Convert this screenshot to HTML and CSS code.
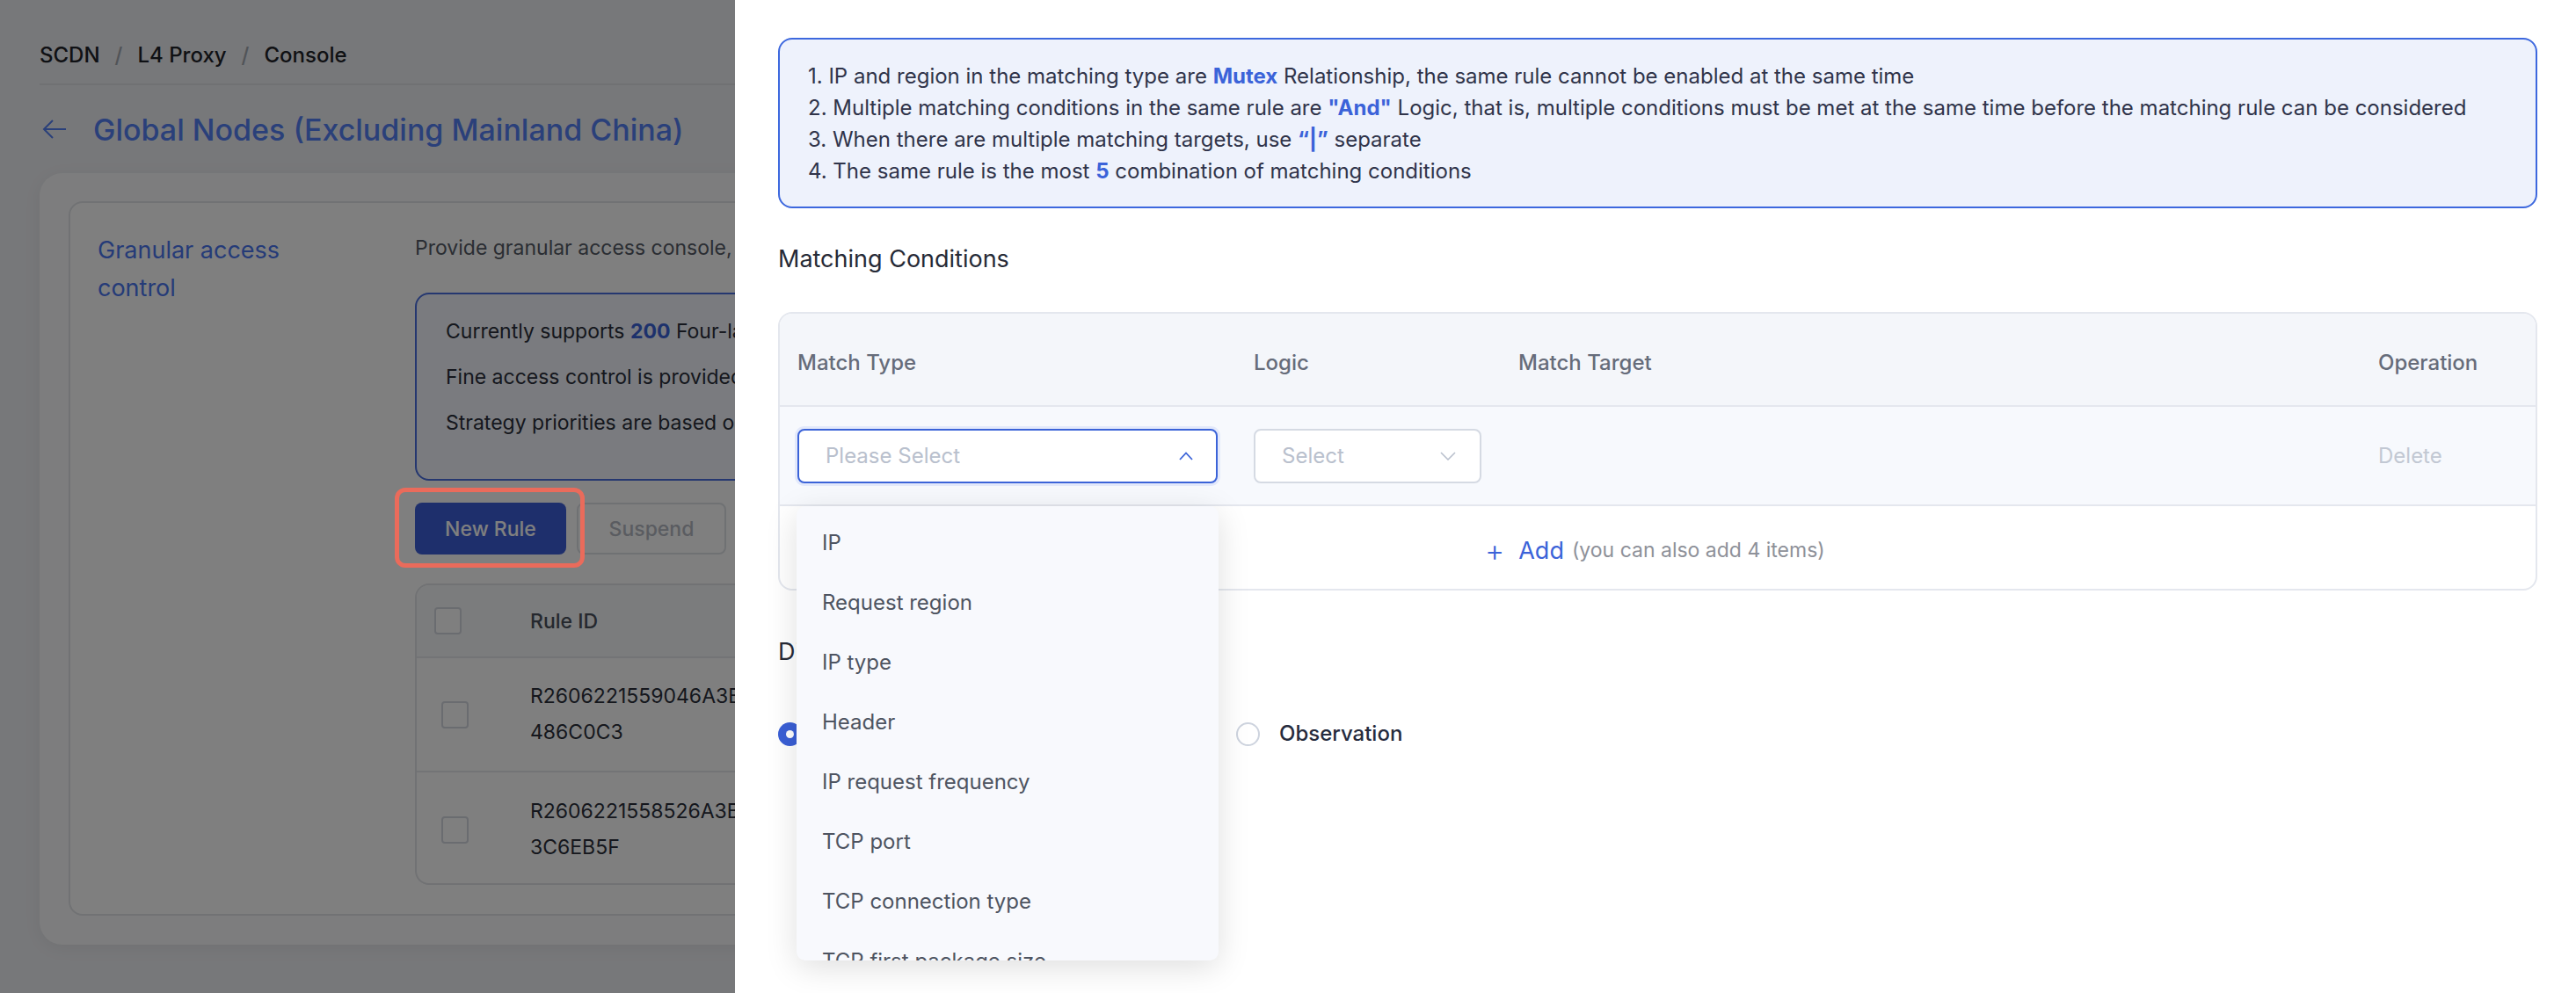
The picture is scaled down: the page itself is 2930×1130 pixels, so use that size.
FILE: index.html
```html
<!DOCTYPE html>
<html lang="en">

<head>
  <meta charset="UTF-8">
  <title>SCDN - L4 Proxy Console</title>
  <link rel="stylesheet" href="styles.css">
</head>

<body>
  <!-- 控制台主体 -->
  <div class="page">
    <div class="crumbs">
      <span>SCDN</span><i>/</i><span>L4 Proxy</span><i>/</i><span>Console</span>
    </div>

    <div class="title-row">
      <svg class="back" width="28" height="24" viewBox="0 0 28 24">
        <path d="M27 12H2M12 2L2 12l10 10" fill="none" stroke="currentColor" stroke-width="2" />
      </svg>
      <h1>Global Nodes (Excluding Mainland China)</h1>
    </div>

    <div class="panel">
      <div class="section">
        <div class="section-name">Granular access control</div>
        <div class="section-body">
          <p class="desc">Provide granular access console, you can customize the four-layer access control rules according to the request characteristics</p>
          <div class="tips">
            <p>Currently supports <b>200</b> Four-layer access control rules, the number of rules already used is 2</p>
            <p>Fine access control is provided for the four-layer proxy forwarding rules of the current domain</p>
            <p>Strategy priorities are based on the rule sorting, the higher the rule, the higher the priority</p>
          </div>
          <div class="toolbar">
            <button class="btn-primary">New Rule</button>
            <button class="btn">Suspend</button>
            <button class="btn">Enable</button>
          </div>
          <div class="rules">
            <div class="rules-head">
              <span class="check"></span>
              <span>Rule ID</span>
              <span>Matching Conditions</span>
            </div>
            <div class="rules-row">
              <span class="check"></span>
              <span>R2606221559046A3E9D2B<br>486C0C3</span>
              <span>IP type</span>
            </div>
            <div class="rules-row">
              <span class="check"></span>
              <span>R2606221558526A3B71F0<br>3C6EB5F</span>
              <span>Request region</span>
            </div>
          </div>
        </div>
      </div>
    </div>
  </div>

  <div class="mask"></div>

  <!-- 右侧抽屉：新建规则 -->
  <div class="drawer">
    <div class="notice">
      <p>1. IP and region in the matching type are <b>Mutex</b> Relationship, the same rule cannot be enabled at the same time</p>
      <p>2. Multiple matching conditions in the same rule are <b>"And"</b> Logic, that is, multiple conditions must be met at the same time before the matching rule can be considered</p>
      <p>3. When there are multiple matching targets, use <b>“|”</b> separate</p>
      <p>4. The same rule is the most <b>5</b> combination of matching conditions</p>
    </div>

    <h3 class="block-title">Matching Conditions</h3>

    <div class="cond">
      <div class="cond-head">
        <span>Match Type</span>
        <span>Logic</span>
        <span>Match Target</span>
        <span>Operation</span>
      </div>
      <div class="cond-row">
        <div class="cell">
          <div class="select open">
            <span>Please Select</span>
            <svg width="16" height="10" viewBox="0 0 16 10">
              <path d="M1 9l7-7.5L15 9" fill="none" stroke="currentColor" stroke-width="1.8" />
            </svg>
            <ul class="options">
              <li>IP</li>
              <li>Request region</li>
              <li>IP type</li>
              <li>Header</li>
              <li>IP request frequency</li>
              <li>TCP port</li>
              <li>TCP connection type</li>
              <li>TCP first package size</li>
              <li>TCP first package content</li>
            </ul>
          </div>
        </div>
        <div class="cell">
          <div class="select small">
            <span>Select</span>
            <svg width="18" height="10" viewBox="0 0 18 10">
              <path d="M1 1l8 8 8-8" fill="none" stroke="currentColor" stroke-width="1.6" />
            </svg>
          </div>
        </div>
        <div class="cell"></div>
        <div class="cell delete">Delete</div>
      </div>
      <div class="cond-add">
        <span class="plus">+</span><span class="add">Add</span><span class="hint">(you can also add 4 items)</span>
      </div>
    </div>

    <h3 class="block-title second">Disposal Method</h3>

    <div class="radios">
      <label class="radio on"><span class="dot"></span>Interception</label>
      <label class="radio"><span class="dot"></span>Observation</label>
    </div>
  </div>
</body>

</html>
```

FILE: styles.css
```css
* {
  margin: 0;
  padding: 0;
  box-sizing: border-box;
  font-family: "Inter", "Noto Sans", sans-serif;
}

body {
  background-color: #eff0f4;
  width: 2930px;
  height: 1130px;
  overflow: hidden;
}

/* 左侧控制台 */
.page {
  padding-left: 45px;
  width: 2886px;
}

.crumbs {
  height: 97px;
  padding-top: 48px;
  line-height: 30px;
  font-size: 24px;
  font-weight: 500;
  color: #1f2329;
  border-bottom: 2px solid #e0e2e7;
}

.crumbs i {
  font-style: normal;
  color: #a3a8b0;
  margin: 0 17px;
}

.title-row {
  display: flex;
  align-items: center;
  height: 44px;
  margin-top: 28px;
  color: #5580f4;
}

.title-row .back {
  margin-left: 3px;
  margin-right: 30px;
}

.title-row h1 {
  font-size: 34px;
  font-weight: 500;
}

.panel {
  margin-top: 28px;
  height: 878px;
  padding: 32px 33px;
  background-color: #fafbfc;
  border-radius: 26px;
  box-shadow: 0 4px 20px rgba(0, 0, 0, 0.06);
}

.section {
  display: grid;
  grid-template-columns: 361px 1fr;
  height: 813px;
  padding: 36px 0 0 31px;
  background-color: #fff;
  border: 2px solid #e2e4e8;
  border-radius: 16px;
}

.section-name {
  width: 260px;
  margin-top: -4px;
  font-size: 27px;
  line-height: 43px;
  color: #4a76f0;
}

.desc {
  font-size: 23px;
  line-height: 30px;
  color: #555b66;
  white-space: nowrap;
}

.tips {
  margin-top: 36px;
  padding: 16px 33px 38px;
  border: 2px solid #4a6fe0;
  border-radius: 16px;
  background-color: #f4f7fe;
  font-size: 23px;
  line-height: 52px;
  color: #2b2f3a;
  white-space: nowrap;
}

.tips b {
  color: #3b63d9;
}

.toolbar {
  display: flex;
  gap: 12px;
  margin-top: 25px;
}

.toolbar button {
  height: 59px;
  border-radius: 8px;
  font-size: 23px;
  font-weight: 500;
}

.btn-primary {
  position: relative;
  width: 172px;
  border: none;
  background-color: #3d5fd8;
  color: #fff;
}

/* 引导高亮框，叠在遮罩上面 */
.btn-primary::after {
  content: '';
  position: absolute;
  inset: -17px -21px -15px -23px;
  border: 5px solid #ea6b5b;
  border-radius: 12px;
  z-index: 20;
}

.btn {
  width: 170px;
  border: 2px solid #dfe2e7;
  background-color: #fff;
  color: #b4b9c2;
}

.rules {
  margin-top: 33px;
  height: 343px;
  border: 2px solid #e2e4e8;
  border-radius: 16px;
  overflow: hidden;
  font-size: 23px;
  color: #2b2f3a;
}

.rules-head,
.rules-row {
  display: grid;
  grid-template-columns: 129px 330px 1fr;
  align-items: center;
  border-bottom: 2px solid #e6e8ec;
}

.rules-head {
  height: 83px;
  background-color: #f7f8fa;
  font-weight: 500;
  color: #4a505c;
}

.rules-row {
  height: 130px;
  line-height: 41px;
}

.rules-row:last-child {
  border-bottom: none;
}

.check {
  width: 31px;
  height: 31px;
  margin-left: 20px;
  border: 2px solid #d5d9e0;
  border-radius: 4px;
  background-color: #fff;
}

.rules-row .check {
  margin-left: 28px;
}

.mask {
  position: fixed;
  inset: 0;
  background-color: rgba(0, 0, 0, 0.5);
  z-index: 10;
}

/* 右侧抽屉 */
.drawer {
  position: fixed;
  top: 0;
  right: 0;
  bottom: 0;
  width: 2094px;
  padding: 43px 44px 0 49px;
  background-color: #fff;
  z-index: 30;
  overflow: hidden;
}

.notice {
  padding: 24px 32px 22px;
  border: 2px solid #3d68de;
  border-radius: 16px;
  background-color: #eef2fc;
  font-size: 24px;
  line-height: 36px;
  color: #30344a;
}

.notice b {
  color: #3b63d9;
  font-weight: 700;
}

.block-title {
  margin-top: 40px;
  font-size: 27px;
  line-height: 36px;
  font-weight: 400;
  color: #262a36;
}

.block-title.second {
  margin-top: 52px;
}

.cond {
  margin-top: 42px;
  border: 2px solid #e4e7ee;
  border-radius: 16px;
}

.cond-head,
.cond-row {
  display: grid;
  grid-template-columns: 519px 301px 1fr 199px;
  align-items: center;
  border-bottom: 2px solid #e4e7ee;
}

.cond-head span,
.cond-row .cell {
  padding-left: 20px;
}

.cond-head {
  height: 106px;
  padding-top: 6px;
  background-color: #f4f6fa;
  border-radius: 14px 14px 0 0;
  font-size: 24px;
  font-weight: 500;
  color: #666c7a;
}

.cond-row {
  height: 113px;
  background-color: #f7f9fd;
}

.select {
  position: relative;
  display: flex;
  align-items: center;
  justify-content: space-between;
  width: 478px;
  height: 62px;
  padding: 0 26px 0 30px;
  border: 2px solid #d5dae3;
  border-radius: 8px;
  background-color: #fff;
  font-size: 24px;
  color: #b9c0cd;
}

.select svg {
  color: #b9c0cd;
}

.select.open {
  border-color: #3b63d8;
  box-shadow: 0 0 0 3px #e3e9fb;
}

.select.open svg {
  color: #3b63d8;
}

.select.small {
  width: 259px;
  padding: 0 27px 0 30px;
}

.delete {
  font-size: 24px;
  color: #c2c8d3;
}

.cond-add {
  height: 94px;
  padding: 6px 0 0 802px;
  display: flex;
  align-items: center;
}

.plus {
  font-size: 34px;
  font-weight: 300;
  color: #3b63d9;
  margin-right: 16px;
}

.add {
  font-size: 27px;
  color: #3b63d9;
  margin-right: 9px;
}

.hint {
  font-size: 23px;
  color: #8e9199;
}

/* 下拉选项面板 */
.options {
  position: absolute;
  top: 86px;
  left: -3px;
  width: 480px;
  height: 517px;
  padding-top: 8px;
  list-style: none;
  background-color: #f8f9fd;
  border-radius: 10px;
  box-shadow: 0 8px 36px rgba(0, 0, 0, 0.13);
  overflow: hidden;
  z-index: 5;
}

.options::before {
  content: '';
  position: absolute;
  top: -7px;
  left: 75px;
  width: 14px;
  height: 14px;
  background-color: #f8f9fd;
  transform: rotate(45deg);
}

.options li {
  height: 68px;
  line-height: 68px;
  padding-left: 29px;
  font-size: 24px;
  color: #4e5461;
}

.radios {
  display: flex;
  margin-top: 57px;
  line-height: 36px;
}

.radio {
  display: flex;
  align-items: center;
  width: 521px;
  font-size: 24px;
  font-weight: 500;
  color: #262b3d;
}

.radio .dot {
  position: relative;
  width: 27px;
  height: 27px;
  margin-right: 22px;
  border: 2px solid #cdd3de;
  border-radius: 50%;
}

.radio.on .dot {
  border: none;
  background-color: #3a5fd6;
}

.radio.on .dot::after {
  content: '';
  position: absolute;
  top: 9px;
  left: 9px;
  width: 9px;
  height: 9px;
  border-radius: 50%;
  background-color: #fff;
}
```
